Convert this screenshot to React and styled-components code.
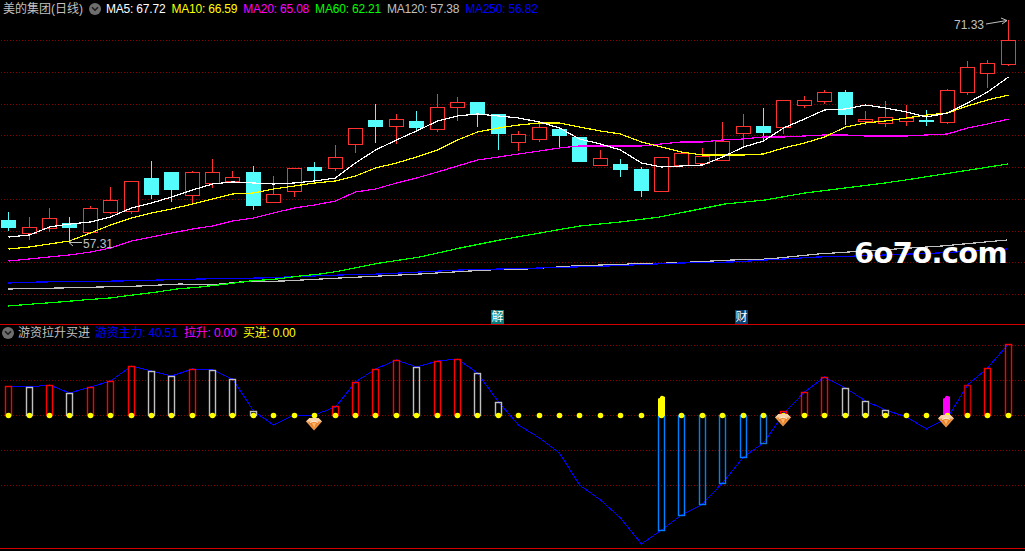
import React from "react";
import styled, { createGlobalStyle } from "styled-components";

const GlobalStyle = createGlobalStyle`
  html, body { margin: 0; padding: 0; background: #000; overflow: hidden; }
  * { box-sizing: border-box; }
`;

const FONT = `"Liberation Sans", "Noto Sans CJK SC", sans-serif`;
const cx = (i) => Math.floor(8.6 + 20.4 * i) + 0.5;

// [high, bodyTop, bodyBottom, low, up]
const CANDLES = [
  [212, 220, 227, 231, 0], [217, 227, 233, 240, 1], [208, 218, 228, 232, 1], [217, 223, 227, 243, 0],
  [206, 208, 232, 233, 1], [187, 200, 212, 214, 1], [181, 181, 211, 214, 1], [161, 178, 194, 199, 0],
  [172, 172, 189, 202, 0], [171, 172, 195, 204, 1], [159, 172, 183, 188, 1], [171, 177, 181, 181, 1],
  [166, 172, 205, 210, 0], [176, 194, 202, 202, 1], [168, 168, 191, 197, 1], [162, 167, 170, 183, 0],
  [145, 157, 168, 171, 1], [128, 128, 144, 153, 1], [104, 120, 126, 143, 0], [114, 119, 126, 144, 1],
  [111, 121, 127, 131, 0], [94, 107, 129, 132, 1], [97, 102, 107, 121, 1], [102, 102, 113, 127, 0],
  [114, 114, 133, 150, 0], [131, 134, 142, 151, 1], [124, 127, 139, 142, 1], [127, 129, 135, 147, 0],
  [137, 137, 161, 162, 0], [150, 158, 165, 165, 1], [159, 164, 169, 177, 0], [167, 169, 190, 197, 0],
  [157, 157, 191, 191, 1], [153, 153, 165, 165, 1], [148, 156, 163, 163, 1], [122, 141, 160, 160, 1],
  [114, 126, 133, 147, 1], [108, 126, 132, 141, 0], [100, 100, 127, 134, 1], [96, 100, 105, 108, 1],
  [90, 92, 101, 104, 1], [90, 92, 114, 125, 0], [111, 119, 121, 125, 1], [101, 117, 123, 127, 1],
  [105, 118, 121, 126, 1], [110, 120, 121, 126, 0], [89, 90, 122, 124, 1], [61, 67, 92, 95, 1],
  [60, 63, 73, 88, 1], [20, 40, 64, 66, 1],
];

const byIndex = (ys) => ys.map((y, i) => [cx(i), y]);

const MA5 = byIndex([
  237, 235, 227, 224, 222, 217, 208, 203, 197, 190, 184, 182, 183, 184, 183, 181, 178, 163, 150, 140, 131, 121, 116, 114, 116,
  118, 122, 128, 139, 144, 150, 163, 167, 166, 165, 157, 147, 141, 128, 119, 110, 109, 105, 108, 112, 117, 113, 103, 92, 77,
]);
const MA10 = byIndex([
  249, 247, 244, 241, 233, 225, 218, 213, 209, 204, 199, 194, 193, 189, 186, 183, 181, 176, 168, 163, 157, 150, 140, 132, 128,
  125, 123, 123, 127, 131, 134, 142, 147, 152, 155, 155, 155, 154, 148, 143, 137, 127, 123, 121, 118, 115, 113, 106, 100, 95,
]);
const MA20 = byIndex([
  261, 259, 257, 255, 252, 248, 241, 237, 233, 229, 226, 221, 218, 213, 208, 205, 201, 192, 189, 183, 178, 172, 166, 160, 157,
  154, 151, 148, 146, 146, 146, 146, 144, 142, 142, 140, 139, 137, 137, 136, 135, 135, 136, 136, 136, 135, 134, 128, 124, 119,
]);
const MA60 = [[8,306],[33,304],[60,302],[83,300],[110,298],[133,295],[157,292],[177,289],[200,287],[227,284],[250,281],[277,279],[300,276],[320,274],[340,271],[380,263],[420,257],[460,248],[500,240],[540,233],[580,226],[620,222],[660,217],[685,212],[725,204],[765,200],[805,193],[845,188],[885,183],[912,179],[1008,164]];
const MA120 = [[8,289],[60,288],[100,287],[140,286],[180,284],[210,285],[240,282],[283,281],[340,278],[420,274],[487,270],[527,269],[573,266],[630,264],[670,263],[692,262],[732,260],[768,259],[818,254],[942,246],[1007,240]];
const MA250 = [[8,283],[40,282],[120,281],[160,280],[200,279],[260,278],[340,275],[380,274],[460,270],[540,268],[607,266],[680,263],[732,262],[818,257],[858,256],[938,253],[1007,249]];

const PRICE_GRID = [40, 72, 104, 135, 167, 199, 231, 262, 294];
const FLOW_GRID = [345, 380, 415, 450, 485];

// [topY, bottomY, kind]
const BARS = [
  [386,415,"r"],[387,415,"g"],[385,415,"r"],[393,415,"g"],[387,415,"r"],[381,415,"r"],[366,415,"r"],[371,415,"g"],
  [376,415,"g"],[369,415,"r"],[370,415,"g"],[379,415,"g"],[411,415,"g"],null,null,null,[406,415,"r"],[382,415,"r"],
  [369,415,"r"],[360,415,"r"],[367,415,"g"],[361,415,"r"],[359,415,"r"],[373,415,"g"],[402,415,"g"],null,null,null,null,
  null,null,null,[415,530,"b"],[415,515,"b"],[415,504,"b"],[415,483,"b"],[415,457,"b"],[415,443,"s"],[411,415,"r"],
  [392,415,"r"],[377,415,"r"],[388,415,"g"],[401,415,"g"],[410,415,"g"],null,null,null,[385,415,"d"],[368,415,"r"],[344,415,"r"],
];
const BAR_COLORS = { r: "#ff0000", g: "#c0c0c0", b: "#0080ff", s: "#1a78d0", d: "#c80000" };

const FLOW = byIndex([
  386, 387, 385, 393, 387, 381, 366, 371, 376, 369, 370, 379, 411, 425, 415, 415, 407, 382, 369, 360, 367, 361, 359, 373, 402,
  425, 438, 453, 485, 500, 518, 544, 530, 515, 504, 483, 457, 443, 414, 392, 377, 388, 401, 410, 417, 429, 418, 385, 368, 344,
]);

const pts = (list) => list.map((p) => p.join(",")).join(" ");

const Page = styled.div`
  width: 1025px;
  height: 551px;
  background: #000;
  display: flex;
  flex-direction: column;
  font-family: ${FONT};
  font-size: 12px;
  overflow: hidden;
`;

const Panel = styled.section`
  position: relative;
  display: flex;
  flex-direction: column;
  height: ${(p) => p.$height}px;
  border-bottom: 1px solid #d00000;
  flex: none;
`;

const Legend = styled.div`
  display: flex;
  align-items: center;
  height: ${(p) => p.$height}px;
  flex: none;
  padding-left: ${(p) => p.$inset}px;
  white-space: nowrap;
  line-height: 16px;
`;

const Title = styled.span`
  color: #c0c0c0;
`;

const Toggle = styled.span`
  width: 12px;
  height: 12px;
  border-radius: 50%;
  background: #6e6e6e;
  display: inline-flex;
  align-items: center;
  justify-content: center;
  margin: ${(p) => p.$margin};
  flex: none;
`;

const Readings = styled.div`
  display: flex;
  gap: ${(p) => p.$gap}px;
  margin-left: ${(p) => p.$offset || 0}px;
  letter-spacing: -0.2px;
`;

const Reading = styled.span`
  color: ${(p) => p.$color};
`;

const Chart = styled.svg`
  display: block;
  width: 1025px;
  flex: 1;
  min-height: 0;
`;

const GridLine = styled.line`
  stroke: #8a0000;
  stroke-width: 1;
  stroke-dasharray: 1 2;
  shape-rendering: crispEdges;
`;

const Curve = styled.polyline`
  fill: none;
  stroke: ${(p) => p.$color};
  stroke-width: ${(p) => p.$w || 1.2};
  shape-rendering: crispEdges;
`;

const Wick = styled.line`
  stroke: ${(p) => (p.$up ? "#ff3232" : "#54fcfc")};
  stroke-width: 1;
  shape-rendering: crispEdges;
`;

const Body = styled.rect`
  fill: ${(p) => (p.$up ? "#000" : "#54fcfc")};
  stroke: ${(p) => (p.$up ? "#ff3232" : "#54fcfc")};
  stroke-width: 1;
  shape-rendering: crispEdges;
`;

const Bar = styled.rect`
  fill: none;
  stroke: ${(p) => p.$color};
  stroke-width: 1.4;
`;

const Dot = styled.circle`
  fill: #ffff00;
`;

const Note = styled.text`
  fill: #c0c0c0;
  font-family: ${FONT};
  font-size: 12px;
`;

const NoteArrow = styled.path`
  fill: none;
  stroke: #c0c0c0;
  stroke-width: 1;
`;

const Tag = styled.span`
  position: absolute;
  bottom: 0;
  left: ${(p) => p.$left}px;
  width: 13px;
  height: 14px;
  background: ${(p) => p.$bg};
  color: #fff;
  font-size: 12px;
  line-height: 14px;
  text-align: center;
`;

const Watermark = styled.div`
  position: absolute;
  left: 854px;
  top: 234px;
  color: #fff;
  font-family: "DejaVu Sans", sans-serif;
  font-weight: 700;
  font-size: 29px;
  line-height: 38px;
  letter-spacing: -0.7px;
  white-space: nowrap;
`;

const Chevron = () => (
  <svg width="8" height="6" viewBox="0 0 8 6">
    <path d="M1 1.2 L4 4.2 L7 1.2" fill="none" stroke="#1c1c1c" strokeWidth="1.6" />
  </svg>
);

const Candle = ({ data, i }) => {
  const [high, top, bottom, low, up] = data;
  const x = cx(i);
  return (
    <g>
      {high < top && <Wick $up={up} x1={x} x2={x} y1={high} y2={top} />}
      {low > bottom && <Wick $up={up} x1={x} x2={x} y1={bottom} y2={low} />}
      <Body $up={up} x={x - 7} y={top + 0.5} width={14} height={Math.max(bottom - top, 1)} />
    </g>
  );
};

const Gem = ({ x, y }) => (
  <g transform={`translate(${x} ${y})`}>
    <polygon points="-8,-2.5 -4.5,-6 4.5,-6 8,-2.5 0,6.5" fill="#e89a52" />
    <polygon points="-8,-2.5 -4.5,-6 4.5,-6 8,-2.5" fill="#f6d2a6" />
    <polygon points="-5,-1.5 5,-1.5 0,5" fill="#f07f22" />
    <path d="M-4 -1.6 Q0 -4.2 4 -1.6" fill="none" stroke="#fff0dc" strokeWidth="1" />
    <polygon points="-2,-1 2,-1 0,4" fill="#f9b56e" />
  </g>
);

const Grid = ({ rows }) =>
  rows.map((y) => <GridLine key={y} x1="1" x2="1025" y1={y + 0.5} y2={y + 0.5} />);

export default function App() {
  return (
    <Page>
      <GlobalStyle />
      <Panel $height={325}>
        <Legend $height={17} $inset={3}>
          <Title>美的集团(日线)</Title>
          <Toggle $margin="0 5px 0 6px">
            <Chevron />
          </Toggle>
          <Readings $gap={6}>
            <Reading $color="#ffffff">MA5: 67.72</Reading>
            <Reading $color="#ffff00">MA10: 66.59</Reading>
            <Reading $color="#ff00ff">MA20: 65.08</Reading>
            <Reading $color="#00ff00">MA60: 62.21</Reading>
            <Reading $color="#c0c0c0">MA120: 57.38</Reading>
            <Reading $color="#0000ff">MA250: 56.82</Reading>
          </Readings>
        </Legend>
        <Chart viewBox="0 17 1025 307">
          <Grid rows={PRICE_GRID} />
          {CANDLES.map((c, i) => (
            <Candle key={i} data={c} i={i} />
          ))}
          <Curve $color="#c0c0c0" points={pts(MA120)} />
          <Curve $color="#0000ff" points={pts(MA250)} />
          <Curve $color="#00ff00" points={pts(MA60)} />
          <Curve $color="#ff00ff" points={pts(MA20)} />
          <Curve $color="#ffff00" points={pts(MA10)} />
          <Curve $color="#ffffff" points={pts(MA5)} />
          <Note x="954" y="29">71.33</Note>
          <NoteArrow d="M986 24 L1007 20.5 M1001 18 L1007 20.5 L1002 24" />
          <Note x="83" y="248">57.31</Note>
          <NoteArrow d="M82 242.5 L69 242.5 M73 239 L69 242.5 L73 246" />
        </Chart>
        <Tag $left={491} $bg="#0a7a7a">解</Tag>
        <Tag $left={735} $bg="#0a3f6f">财</Tag>
        <Watermark>6o7o.com</Watermark>
      </Panel>
      <Panel $height={224}>
        <Legend $height={16} $inset={2}>
          <Toggle $margin="0 4px 0 0">
            <Chevron />
          </Toggle>
          <Title>游资拉升买进</Title>
          <Readings $gap={6.5} $offset={5}>
            <Reading $color="#0000ff">游资主力: 40.51</Reading>
            <Reading $color="#ff00ff">拉升: 0.00</Reading>
            <Reading $color="#ffff00">买进: 0.00</Reading>
          </Readings>
        </Legend>
        <Chart viewBox="0 341 1025 207">
          <Grid rows={FLOW_GRID} />
          <Curve $color="#0000ff" $w={1} points={pts(FLOW)} />
          {BARS.map((b, i) =>
            b ? (
              <Bar key={i} $color={BAR_COLORS[b[2]]} x={cx(i) - 3} y={b[0] + 0.5} width={6} height={b[1] - b[0]} />
            ) : null
          )}
          <path d="M658 416 V399 Q658 398 660 398 V397 Q661.5 395 663 396 L665 397 V416 Z" fill="#ffff00" />
          <path d="M943 416 V399 Q943 398 945 398 V397 Q946.5 395 948 396 L950 397 V416 Z" fill="#ff00ff" />
          {BARS.map((_, i) => (
            <Dot key={i} cx={cx(i)} cy={415.5} r={2.8} />
          ))}
          <Gem x={314} y={424} />
          <Gem x={783} y={420} />
          <Gem x={946} y={421} />
        </Chart>
      </Panel>
    </Page>
  );
}
